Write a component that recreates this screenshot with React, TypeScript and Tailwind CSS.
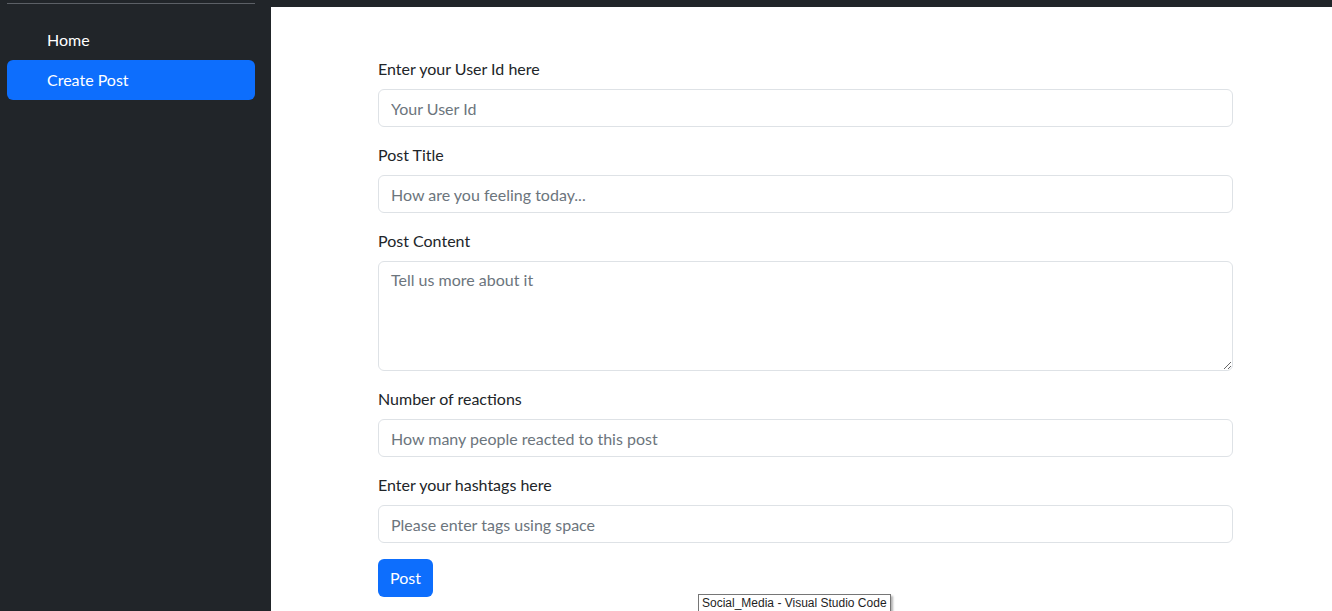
import React from 'react';

const fieldClass =
  'block w-full h-[38px] px-3 rounded-[6px] border border-[#dee2e6] bg-white text-[16px] text-[#212529] placeholder:text-[#6c757d] outline-none';

const App: React.FC = () => {
  return (
    <div className="relative flex h-[611px] w-[1332px] overflow-hidden font-['Lato','Open_Sans',sans-serif] text-[#212529]">
      {/* Sidebar */}
      <aside className="w-[271px] shrink-0 bg-[#212529] pl-[7px] pr-4 pt-[3px]">
        <hr className="border-0 border-t border-[#5c6066]" />
        <ul className="mt-4 flex flex-col">
          <li>
            <a className="block h-10 rounded-[6px] pl-10 pt-2 text-[16px] leading-6 text-white">Home</a>
          </li>
          <li>
            <a className="block h-10 rounded-[6px] bg-[#0d6efd] pl-10 pt-2 text-[16px] leading-6 text-white">
              Create Post
            </a>
          </li>
        </ul>
      </aside>

      {/* Main */}
      <main className="flex flex-1 flex-col">
        <div className="h-[7px] bg-[#212529]" />
        <div className="flex-1 bg-white pl-[107px] pt-[50px]">
          <form className="w-[855px]">
            <div className="mb-4">
              <label className="mb-2 block text-[16px] leading-6">Enter your User Id here</label>
              <input className={fieldClass} placeholder="Your User Id" />
            </div>
            <div className="mb-4">
              <label className="mb-2 block text-[16px] leading-6">Post Title</label>
              <input className={fieldClass} placeholder="How are you feeling today..." />
            </div>
            <div className="mb-4">
              <label className="mb-2 block text-[16px] leading-6">Post Content</label>
              <textarea
                className="block h-[110px] w-full rounded-[6px] border border-[#dee2e6] px-3 py-[6px] text-[16px] leading-6 placeholder:text-[#6c757d] outline-none"
                placeholder="Tell us more about it"
              />
            </div>
            <div className="mb-4">
              <label className="mb-2 block text-[16px] leading-6">Number of reactions</label>
              <input className={fieldClass} placeholder="How many people reacted to this post" />
            </div>
            <div className="mb-4">
              <label className="mb-2 block text-[16px] leading-6">Enter your hashtags here</label>
              <input className={fieldClass} placeholder="Please enter tags using space" />
            </div>
            <button
              type="button"
              className="h-[38px] rounded-[6px] bg-[#0d6efd] px-3 text-[16px] text-white"
            >
              Post
            </button>
          </form>
        </div>
      </main>

      {/* OS tooltip */}
      <div className="absolute left-[698px] top-[594px] h-[20px] border border-[#767676] bg-white px-[3px] text-[12px] leading-[16px] text-[#1e1e1e] shadow-[2px_2px_2px_rgba(0,0,0,0.3)] font-['Liberation_Sans',sans-serif]">
        Social_Media - Visual Studio Code
      </div>
    </div>
  );
};

export default App;
